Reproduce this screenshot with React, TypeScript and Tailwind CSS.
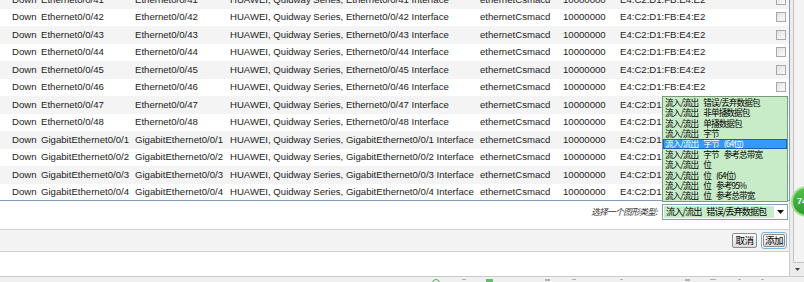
const ports = [
  ...[41, 42, 43, 44, 45, 46, 47, 48].map((n) => `Ethernet0/0/${n}`),
  ...[1, 2, 3, 4].map((n) => `GigabitEthernet0/0/${n}`),
];

const graphTypes = [
  "流入/流出 错误/丢弃数据包",
  "流入/流出 非单播数据包",
  "流入/流出 单播数据包",
  "流入/流出 字节",
  "流入/流出 字节 (64位)",
  "流入/流出 字节 参考总带宽",
  "流入/流出 位",
  "流入/流出 位 (64位)",
  "流入/流出 位 参考95%",
  "流入/流出 位 参考总带宽",
];

const cjk = "font-['Noto_Sans_CJK_SC','Liberation_Sans',sans-serif]";

// CJK label whose words are separated by a fixed gap
function Words({ text }: { text: string }) {
  return (
    <span className="flex items-center gap-[5px] leading-none">
      {text.split(" ").map((w, i) => (
        <span key={i}>{w}</span>
      ))}
    </span>
  );
}

function Checkbox() {
  return (
    <span className="block h-[10px] w-[10px] border border-[#a9a9a9] bg-gradient-to-br from-[#e2e2e2] to-[#fbfbfb]" />
  );
}

function PortRow({ name, index }: { name: string; index: number }) {
  return (
    <div
      className={`grid h-[17.5px] grid-cols-[12px_29px_94px_95px_250px_83px_57px_156px_10px_3px] items-center whitespace-nowrap ${
        index % 2 === 0 ? "bg-[#f4f4f4]" : "bg-white"
      }`}
    >
      <span />
      <span>Down</span>
      <span>{name}</span>
      <span>{name}</span>
      <span>HUAWEI, Quidway Series, {name} Interface</span>
      <span>ethernetCsmacd</span>
      <span>10000000</span>
      <span>E4:C2:D1:FB:E4:E2</span>
      <Checkbox />
      <span />
    </div>
  );
}

export default function App() {
  return (
    <div className="relative h-[282px] w-[804px] overflow-hidden bg-white font-['Liberation_Sans',sans-serif] text-[9.6px] text-[#222]">
      <div className="flex h-[277px] border-b border-[#c9c9c9]">
        <div className="flex w-[790px] flex-col">
          {/* port table */}
          <div className="h-[201px] overflow-hidden border-r border-b border-[#7f9db9]">
            <div className="-mt-[9px]">
              {ports.map((p, i) => (
                <PortRow key={p} name={p} index={i} />
              ))}
            </div>
          </div>

          {/* graph type selector */}
          <div className="flex h-[28px] items-start justify-end gap-[5px] border-r border-[#c9c9c9] pt-[3px] pr-[1px]">
            <span className={`${cjk} mt-[1px] text-[8.6px] italic tracking-[-0.6px] text-[#333]`}>选择一个图形类型:</span>
            <div className="flex h-[16px] w-[126px] items-center border border-[#7f9db9] bg-white p-[1px]">
              <span className={`${cjk} flex h-full flex-1 items-center bg-[#c8ecc8] pl-[2px] text-[9.2px] leading-none tracking-[-1px] text-black`}>
                <Words text="流入/流出 错误/丢弃数据包" />
              </span>
              <span className="flex w-[12px] justify-center">
                <svg width="7" height="4" viewBox="0 0 7 4">
                  <path d="M0 0h7L3.5 4z" fill="#111" />
                </svg>
              </span>
            </div>
          </div>

          {/* button bar */}
          <div className="flex h-[23px] items-center justify-end gap-[4px] border-y border-r border-[#cfcfcf] bg-[#f3f3f3] pr-[2px]">
            <button className={`${cjk} h-[15px] w-[25px] rounded-[2px] border border-[#8c8c8c] bg-gradient-to-b from-[#fdfdfd] to-[#dcdcdc] text-[9.5px] leading-none tracking-[-0.6px] text-black`}>
              取消
            </button>
            <button className="rounded-[3px] border border-[#7ab3dc] p-[1px]">
              <span className={`${cjk} flex h-[13px] w-[22px] items-center justify-center rounded-[2px] border border-[#8c8c8c] bg-gradient-to-b from-[#fdfdfd] to-[#dcdcdc] text-[9.5px] leading-none tracking-[-0.6px] text-black`}>
                添加
              </span>
            </button>
          </div>

          <div className="flex-1 border-r border-[#c9c9c9]" />
        </div>

        {/* page scrollbar */}
        <div className="flex w-[14px] flex-col bg-[#ececec]">
          <div className="ml-[3px] flex-1 border-l border-b border-[#c4c4c4] bg-[#f3f3f3]" />
          <div className="flex h-[13px] items-center justify-center">
            <svg width="5" height="3" viewBox="0 0 5 3">
              <path d="M0 0h5L2.5 3z" fill="#444" />
            </svg>
          </div>
        </div>
      </div>

      {/* status strip, icons cut off by window bottom */}
      <div className="flex h-[5px] items-start bg-[#f0f0f0] pl-[432px] pt-[2px]">
        <span className="h-[8px] w-[8px] rounded-full border border-[#3cb54a]" />
        <span className="ml-[22px] h-[1px] w-[4px] bg-[#b0b0b0]" />
        <span className="ml-[20px] h-[3px] w-[7px] bg-[#5cc06a]" />
        <span className="ml-[52px] h-[2px] w-[5px] bg-[#b0b0b0]" />
        <span className="ml-[22px] h-[1px] w-[4px] bg-[#b0b0b0]" />
        <span className="ml-[44px] h-[1px] w-[3px] bg-[#b0b0b0]" />
        <span className="ml-[62px] h-[2px] w-[5px] bg-[#b0b0b0]" />
        <span className="ml-[20px] h-[1px] w-[6px] bg-[#b0b0b0]" />
        <span className="ml-[22px] h-[1px] w-[3px] bg-[#b0b0b0]" />
        <span className="ml-[20px] h-[1px] w-[3px] bg-[#b0b0b0]" />
      </div>

      {/* open dropdown list */}
      <div className="absolute top-[96px] left-[662px] w-[126px] border border-[#7a9a7a] bg-[#c8ecc8]">
        {graphTypes.map((t, i) => (
          <div
            key={t}
            className={`${cjk} flex h-[10.4px] items-center overflow-hidden whitespace-nowrap pl-[2px] text-[8.6px] leading-none tracking-[-0.9px] ${
              i === 4 ? "bg-[#3399ff] text-white outline outline-1 -outline-offset-1 outline-[#1f5fae]" : "text-black"
            }`}
          >
            <Words text={t} />
          </div>
        ))}
      </div>

      {/* floating speed ball */}
      <div className="absolute top-[186px] left-[791px] flex h-[31px] w-[31px] items-start rounded-full border-2 border-[#9ee08f] bg-gradient-to-b from-[#55c04a] to-[#2a9a2e] pt-[7px] pl-[4px] text-[9px] font-bold text-white">
        74%
      </div>
    </div>
  );
}
